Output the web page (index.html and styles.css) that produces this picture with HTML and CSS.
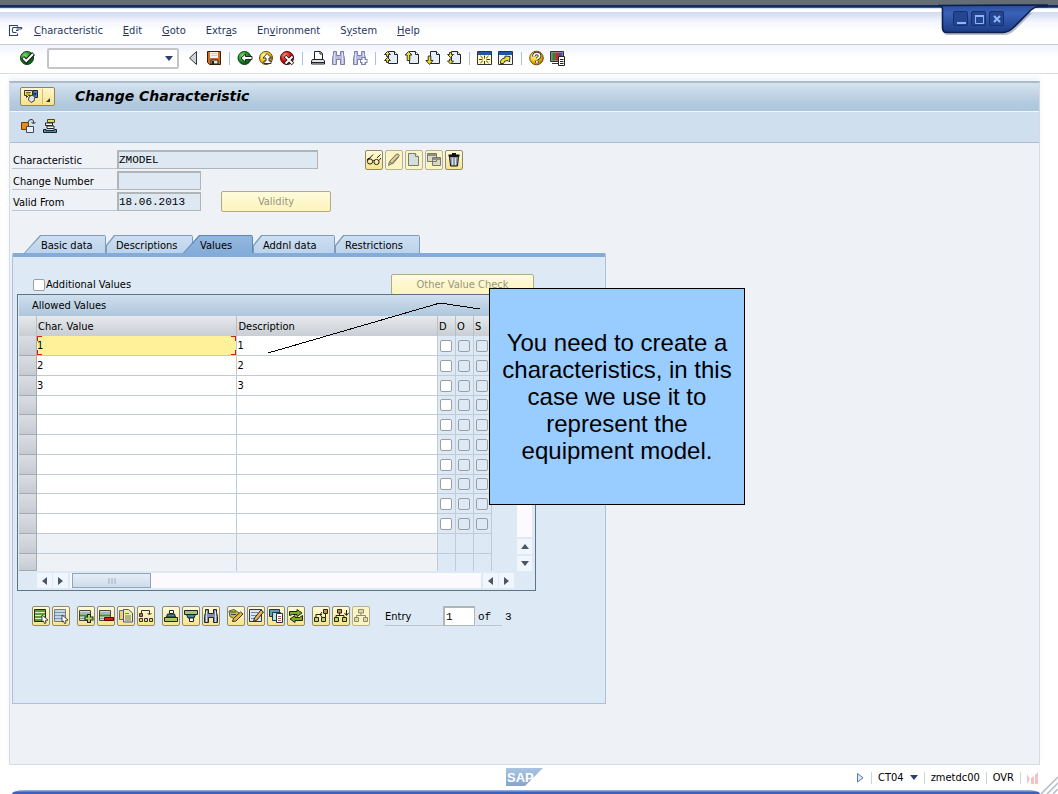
FILE: index.html
```html
<!DOCTYPE html>
<html lang="en">
<head>
<meta charset="utf-8">
<title>Change Characteristic</title>
<link rel="stylesheet" href="styles.css">
</head>
<body>
<svg class="defs" aria-hidden="true">
  <defs>
    <radialGradient id="green" cx=".35" cy=".3" r=".8"><stop offset="0" stop-color="#7fdc6a"/><stop offset=".5" stop-color="#1d8a2a"/><stop offset="1" stop-color="#04440f"/></radialGradient>
    <radialGradient id="gold" cx=".35" cy=".3" r=".8"><stop offset="0" stop-color="#fffbb0"/><stop offset=".5" stop-color="#f2c71c"/><stop offset="1" stop-color="#a06a00"/></radialGradient>
    <radialGradient id="red" cx=".35" cy=".3" r=".8"><stop offset="0" stop-color="#ff8a70"/><stop offset=".5" stop-color="#cf1616"/><stop offset="1" stop-color="#6a0000"/></radialGradient>
    <linearGradient id="cap" x1="0" y1="0" x2="0" y2="1"><stop offset="0" stop-color="#2b4c9c"/><stop offset=".3" stop-color="#3a62b8"/><stop offset="1" stop-color="#1b3b86"/></linearGradient>
    <linearGradient id="logo" x1="0" y1="0" x2="0" y2="1"><stop offset="0" stop-color="#a9c3e2"/><stop offset="1" stop-color="#85a5cf"/></linearGradient>
    <symbol id="page" viewBox="0 0 16 16"><path d="M5.500 1.500h6l3 3v9h-9z" fill="#e4eefb" stroke="#222"/><path d="M11.500 1.500v3h3" fill="#fff" stroke="#222"/></symbol>
    <symbol id="binoc" viewBox="0 0 16 16"><path d="M1.500 14.500v-6l1-4v-3h3v4h4v-4h3v3l1 4v6h-4v-5h-4v5z" fill="#b9bce0" stroke="#7b7fae"/><path d="M3.500 3v11M11.500 3v11" stroke="#dcdef2"/></symbol>
  </defs>
</svg>

<div class="window">
  <div class="window-edge"></div>
  <div class="window-controls">
    <svg class="controls-shape" width="120" height="38" viewBox="0 0 120 38" aria-hidden="true">
      <path d="M3 13H5V29Q5 35 10 35H66Q72 35 77 30L94 13z" fill="#8a90a8" opacity=".6"/>
      <path d="M0 5.500H2Q4.500 6 4.500 10V28Q4.500 32.500 9 32.500H64Q70 32.500 75 28L93 10Q97 6.500 101 6.500H109V5z" fill="url(#cap)" stroke="#0c1f4f" stroke-width="1.600"/>
    </svg>
    <button class="wbtn" aria-label="Minimize"><svg width="14" height="14"><path d="M3 11h9" stroke="#8fb4ff" stroke-width="2"/></svg></button>
    <button class="wbtn" aria-label="Maximize"><svg width="14" height="14"><path d="M3 3.500h9M3.500 3v8.500h8V3" fill="none" stroke="#8fb4ff"/><path d="M3 4h9" stroke="#8fb4ff" stroke-width="2"/></svg></button>
    <button class="wbtn" aria-label="Close"><svg width="14" height="14"><path d="M4 4l6 6M10 4l-6 6" stroke="#8fb4ff" stroke-width="2"/></svg></button>
  </div>

  <nav class="menubar">
    <svg width="16" height="14" viewBox="0 0 16 14" aria-hidden="true"><path d="M9.500 2.500V1.500h-8v10h8V9.500M5 3.500h8.500q1 1.200-1 1.500H8.500M5 3.500Q3.500 6 5 8.500h3.500M8 6.500h2.500" fill="none" stroke="#33416b" stroke-width="1.100"/></svg>
    <a href="#"><u>C</u>haracteristic</a><a href="#"><u>E</u>dit</a><a href="#"><u>G</u>oto</a><a href="#">Extr<u>a</u>s</a><a href="#">En<u>v</u>ironment</a><a href="#">S<u>y</u>stem</a><a href="#"><u>H</u>elp</a>
  </nav>

  <div class="toolbar">
    <button class="tool enter" aria-label="Enter"><svg viewBox="0 0 16 16"><circle cx="8" cy="8" r="6.500" fill="url(#green)" stroke="#0c3d12"/><path d="M3.800 7.500l3.400 3.600L14.500 3.500" fill="none" stroke="#111" stroke-width="4"/><path d="M4.200 8l3 3L14 4" fill="none" stroke="#fff" stroke-width="2"/></svg></button>
    <div class="combo"><select aria-label="Command"></select><svg width="8" height="5"><path d="M0 0h8L4 5z" fill="#2b3e6e"/></svg></div>
    <button class="tool" aria-label="Collapse"><svg viewBox="0 0 16 16"><path d="M11.500 1.500v13L4.500 8z" fill="#cfd3da" stroke="#333"/></svg></button>
    <button class="tool" aria-label="Save"><svg viewBox="0 0 16 16"><path d="M1.500 1.500h13v13h-11l-2-2z" fill="#c8702a" stroke="#3a1c0a"/><path d="M4 2h8v6H4z" fill="#fff3f0"/><path d="M5 3.500h6M5 5.500h6" stroke="#e9bcb4"/><path d="M5 10h7v4H5z" fill="#ddd" stroke="#3a1c0a"/><path d="M6 11h2v3H6z" fill="#222"/></svg></button>
    <span class="sep"></span>
    <button class="tool" aria-label="Back"><svg viewBox="0 0 16 16"><circle cx="7.500" cy="8" r="6.500" fill="url(#green)" stroke="#0c3d12"/><path d="M4 8l4.500-4v2.500H15v3H8.500V12z" fill="#fff" stroke="#111" stroke-width=".9"/></svg></button>
    <button class="tool" aria-label="Exit"><svg viewBox="0 0 16 16"><circle cx="8" cy="8" r="6.500" fill="url(#gold)" stroke="#6b4a00"/><path d="M9 3.500l4.500 4.500h-2.500v3h2v2.500H6V11h2V8H5z" fill="#fff" stroke="#222" stroke-width=".9"/></svg></button>
    <button class="tool" aria-label="Cancel"><svg viewBox="0 0 16 16"><circle cx="8" cy="8" r="6.500" fill="url(#red)" stroke="#5a0000"/><path d="M6 6l8 8M14 6l-8 8" stroke="#222" stroke-width="3.500"/><path d="M6.500 6.500l7 7M13.500 6.500l-7 7" stroke="#fff" stroke-width="1.800"/></svg></button>
    <span class="sep"></span>
    <button class="tool" aria-label="Print"><svg viewBox="0 0 16 16"><path d="M4.500 1.500h6l2 2v6h-8z" fill="#fff" stroke="#222"/><path d="M10 2v2h2.500" fill="none" stroke="#222"/><path d="M2.500 9.500h11l1 1.500v3h-13v-3z" fill="#dfe3ea" stroke="#222"/><path d="M2 12.500h12" stroke="#222"/></svg></button>
    <button class="tool" aria-label="Find"><svg viewBox="0 0 16 16"><use href="#binoc"/></svg></button>
    <button class="tool" aria-label="Find next"><svg viewBox="0 0 16 16"><use href="#binoc"/><path d="M11.500 7v8M8 11h7.500" stroke="#7b7fae" stroke-width="4"/><path d="M11.500 8v6M9 11h5.500" stroke="#fff" stroke-width="2"/></svg></button>
    <span class="sep"></span>
    <button class="tool" aria-label="First page"><svg viewBox="0 0 16 16"><use href="#page"/><path d="M4.500 1.500L7.500 4.500H5.500v2H3.500v-2H1.500zM4.500 7.500l3 3H5.500v2H3.500v-2H1.500z" fill="#f5e11c" stroke="#333"/></svg></button>
    <button class="tool" aria-label="Previous page"><svg viewBox="0 0 16 16"><use href="#page"/><path d="M4.500 1.500L8 5H5.800v5.500H3.200V5H1z" fill="#f5e11c" stroke="#333"/></svg></button>
    <button class="tool" aria-label="Next page"><svg viewBox="0 0 16 16"><use href="#page"/><path d="M4.500 14.500L8 10.500H5.800V6H3.200v4.500H1z" fill="#f5e11c" stroke="#333"/></svg></button>
    <button class="tool" aria-label="Last page"><svg viewBox="0 0 16 16"><use href="#page"/><path d="M4.500 7.500l3-3H5.500v-2H3.500v2H1.500zM4.500 14l3-3H5.500V9H3.500v2H1.500z" fill="#f5e11c" stroke="#333"/></svg></button>
    <span class="sep"></span>
    <button class="tool" aria-label="New session"><svg viewBox="0 0 16 16"><path d="M.5 1.500h14v13H.5z" fill="#fff9c4" stroke="#333"/><path d="M1 2h13v3H1z" fill="#2356a8"/><path d="M7.500 5.500v3M7.500 11v3M2 9.500h3.500M9.500 9.500H13M3.500 6l2.300 2.200M11.500 6L9.200 8.200M3.500 13l2.300-2.200M11.500 13l-2.300-2.200" stroke="#4b4000"/></svg></button>
    <button class="tool" aria-label="Shortcut"><svg viewBox="0 0 16 16"><path d="M.5 1.500h14v13H.5z" fill="#f2f5fa" stroke="#333"/><path d="M1 2h13v3H1z" fill="#2356a8"/><path d="M2.500 13.500q-.5-5 4.500-5.500V6l5 .5-.5 5.500-1.500-1.500q-4-.5-4.500 3z" fill="#f5e11c" stroke="#333"/></svg></button>
    <span class="sep"></span>
    <button class="tool" aria-label="Help"><svg viewBox="0 0 16 16"><circle cx="7.500" cy="8" r="6.800" fill="url(#gold)" stroke="#7a4e00"/><path d="M4.800 6.500q0-3 2.900-3t2.900 2.500q0 1.500-2.700 3M7.900 10.800v2" fill="none" stroke="#333" stroke-width="3.400"/><path d="M4.800 6.500q0-3 2.900-3t2.900 2.500q0 1.500-2.700 3M7.900 11v1.700" fill="none" stroke="#fff" stroke-width="1.700"/></svg></button>
    <button class="tool" aria-label="Customize layout"><svg viewBox="0 0 16 16"><path d="M.5 1.500h13v10H.5zM2 13.500h7" fill="#888" stroke="#333"/><path d="M2.500 3h3v7h-3z" fill="#1e8b2e"/><path d="M5.500 3H9v7H5.500z" fill="#d82020"/><path d="M9 3h3v7H9z" fill="#2750d8"/><path d="M8.500 6.500h6v9h-6z" fill="#fff" stroke="#222"/><path d="M10 9.500h3.500M10 11.500h3.500M10 13.500h3.500" stroke="#222"/></svg></button>
  </div>

  <main class="screen">
    <header class="titlebar">
      <button class="service" aria-label="Services for object">
        <svg width="18" height="15" viewBox="0 0 18 15"><path d="M2.500 1.500h8v5h-4l-2 2v-2h-2z" fill="#ffe65a" stroke="#333"/><path d="M4 3.500h5M4 5h4" stroke="#333" stroke-width=".7"/><path d="M11 1.500h4.500v7H11z" fill="#4a86c8" stroke="#223"/><path d="M12.500 3l2 2-2 2z" fill="#112"/><path d="M7 8l3-2 3 2-1 4-3 1.500L6.500 11z" fill="#dfe3e8" stroke="#444"/></svg>
        <span class="service-line"></span>
        <svg width="5" height="5"><path d="M4 1v4H0z" fill="#333"/></svg>
      </button>
      <h1>Change Characteristic</h1>
    </header>
    <div class="appbar">
      <button class="tool" aria-label="Copy from"><svg viewBox="0 0 16 16"><path d="M1.500 4.500h7v7h-7z" fill="#e88a1a" stroke="#6b3c08"/><path d="M6.500 8.500h7v6h-7z" fill="#e8f0fb" stroke="#3a4a66"/><path d="M8 4q1-3 4-2.500 2 .5 1.500 3.500M11.500 4l2 2 2-2" fill="none" stroke="#333"/></svg></button>
      <button class="tool" aria-label="Where used"><svg viewBox="0 0 16 16"><path d="M5.500 1.500h7v3h-7z" fill="#e3d860" stroke="#444"/><path d="M3.500 5h7v2.500h-7zM5 8h7v2.500H5z" fill="#fff" stroke="#222"/><path d="M1.500 14.500v-3H4v1h8v-1h2.500v3z" fill="#5d8ca0" stroke="#123"/></svg></button>
    </div>

    <div class="content">
      <form class="head">
        <div class="fields">
          <div class="field"><label for="char">Characteristic</label><input id="char" class="long" value="ZMODEL" readonly></div>
          <div class="field"><label for="num">Change Number</label><input id="num" value="" readonly></div>
          <div class="field"><label for="from">Valid From</label><input id="from" value="18.06.2013" readonly><button type="button" class="btn validity" disabled>Validity</button></div>
        </div>
        <div class="icons">
          <button type="button" class="ib" aria-label="Display"><svg viewBox="0 0 16 16"><path d="M7 2.500L3 7M14.500 2.500L11 6" fill="none" stroke="#222"/><circle cx="4" cy="9.500" r="2.600" fill="none" stroke="#222"/><circle cx="10.500" cy="10" r="2.600" fill="none" stroke="#222"/><path d="M6.500 9q1-1 1.500 0M1.500 9V7l2-1M13 8.500L15 6" fill="none" stroke="#222"/></svg></button>
          <button type="button" class="ib off" aria-label="Change" disabled><svg viewBox="0 0 16 16"><path d="M2.500 13.500l1-4 7-7.500q2-.5 3 1.500l-7.500 8z" fill="#d0c8a8" stroke="#77714f"/><path d="M4 10l2.500 2L12.500 5" fill="none" stroke="#77714f"/></svg></button>
          <button type="button" class="ib off" aria-label="Create" disabled><svg viewBox="0 0 16 16"><path d="M2.500 1.500h7l3 3v9h-10z" fill="#d3dfdd" stroke="#77796a"/><path d="M9.500 1.500v3h3" fill="#fff" stroke="#77796a"/></svg></button>
          <button type="button" class="ib off" aria-label="Copy" disabled><svg viewBox="0 0 16 16"><path d="M1.500 1.500h9v8h-9zM6.500 5.500h8v8h-8z" fill="#d8d8c4" stroke="#77796a"/><path d="M2 2h8v2H2zM7 6h7v2H7z" fill="#8c9088"/></svg></button>
          <button type="button" class="ib" aria-label="Delete"><svg viewBox="0 0 16 16"><path d="M3.500 4.500h9l-1 9.500h-7z" fill="#8f9aac" stroke="#111"/><path d="M2.500 3.500h11M6 2h4" stroke="#111" stroke-width="1.800"/><path d="M6.500 6v7M9.500 6v7" stroke="#dce3ee"/></svg></button>
        </div>
      </form>

      <div class="tabs" role="tablist">
        <button role="tab" class="tab slope t1"><span>Basic data</span></button><button role="tab" class="tab t2"><span>Descriptions</span></button><button role="tab" class="tab slope active t3" aria-selected="true"><span>Values</span></button><button role="tab" class="tab t4"><span>Addnl data</span></button><button role="tab" class="tab t5"><span>Restrictions</span></button>
      </div>

      <section class="panel">
        <div class="options">
          <label class="check"><input type="checkbox">Additional Values</label>
          <button class="btn other" disabled>Other Value Check</button>
        </div>
        <div class="frame">
          <h2>Allowed Values</h2>
          <div class="grid-area">
            <table>
              <colgroup><col class="c-sel"><col class="c-txt"><col class="c-txt"><col class="c-box"><col class="c-box"><col class="c-box"></colgroup>
              <thead><tr><th></th><th>Char. Value</th><th>Description</th><th>D</th><th>O</th><th>S</th></tr></thead>
              <tbody>
                <tr><th></th><td class="current">1</td><td>1</td><td><input type="checkbox" aria-label="D"></td><td><input type="checkbox" disabled aria-label="O"></td><td><input type="checkbox" disabled aria-label="S"></td></tr>
                <tr><th></th><td>2</td><td>2</td><td><input type="checkbox" aria-label="D"></td><td><input type="checkbox" disabled aria-label="O"></td><td><input type="checkbox" disabled aria-label="S"></td></tr>
                <tr><th></th><td>3</td><td>3</td><td><input type="checkbox" aria-label="D"></td><td><input type="checkbox" disabled aria-label="O"></td><td><input type="checkbox" disabled aria-label="S"></td></tr>
                <tr><th></th><td></td><td></td><td><input type="checkbox" aria-label="D"></td><td><input type="checkbox" disabled aria-label="O"></td><td><input type="checkbox" disabled aria-label="S"></td></tr>
                <tr><th></th><td></td><td></td><td><input type="checkbox" aria-label="D"></td><td><input type="checkbox" disabled aria-label="O"></td><td><input type="checkbox" disabled aria-label="S"></td></tr>
                <tr><th></th><td></td><td></td><td><input type="checkbox" aria-label="D"></td><td><input type="checkbox" disabled aria-label="O"></td><td><input type="checkbox" disabled aria-label="S"></td></tr>
                <tr><th></th><td></td><td></td><td><input type="checkbox" aria-label="D"></td><td><input type="checkbox" disabled aria-label="O"></td><td><input type="checkbox" disabled aria-label="S"></td></tr>
                <tr><th></th><td></td><td></td><td><input type="checkbox" aria-label="D"></td><td><input type="checkbox" disabled aria-label="O"></td><td><input type="checkbox" disabled aria-label="S"></td></tr>
                <tr><th></th><td></td><td></td><td><input type="checkbox" aria-label="D"></td><td><input type="checkbox" disabled aria-label="O"></td><td><input type="checkbox" disabled aria-label="S"></td></tr>
                <tr><th></th><td></td><td></td><td><input type="checkbox" aria-label="D"></td><td><input type="checkbox" disabled aria-label="O"></td><td><input type="checkbox" disabled aria-label="S"></td></tr>
                <tr class="blank"><th></th><td></td><td></td><td></td><td></td><td></td></tr>
                <tr class="blank"><th></th><td></td><td></td><td></td><td></td><td></td></tr>
              </tbody>
            </table>
            <div class="vscroll">
              <span class="vtrack"></span>
              <button aria-label="Scroll up"><svg width="8" height="5"><path d="M0 5h8L4 0z" fill="#4a5866"/></svg></button>
              <button aria-label="Scroll down"><svg width="8" height="5"><path d="M0 0h8L4 5z" fill="#4a5866"/></svg></button>
            </div>
          </div>
          <div class="hscroll">
            <button aria-label="First column"><svg width="5" height="8"><path d="M5 0v8L0 4z" fill="#4a5866"/></svg></button>
            <button aria-label="Next column"><svg width="5" height="8"><path d="M0 0v8l5-4z" fill="#4a5866"/></svg></button>
            <div class="htrack"><span class="thumb"><svg width="8" height="6"><path d="M0 1h8M0 3h8M0 5h8" stroke="#9fb0c4" stroke-dasharray="2 1"/></svg></span></div>
            <button aria-label="Scroll left"><svg width="5" height="8"><path d="M5 0v8L0 4z" fill="#4a5866"/></svg></button>
            <button aria-label="Scroll right"><svg width="5" height="8"><path d="M0 0v8l5-4z" fill="#4a5866"/></svg></button>
          </div>
        </div>

        <div class="actions">
          <div class="icons">
            <button class="ib" aria-label="Select all"><svg viewBox="0 0 16 16"><path d="M1.500 1.500h11v12h-11z" fill="#5f9a34" stroke="#222"/><path d="M2 4.500h10M2 7.500h10M2 10.500h10" stroke="#dff0b8"/><path d="M9 7l6 5-2.500.5L13 15l-1.500.5-1-2.500L9 14z" fill="#fff" stroke="#222" stroke-width=".8"/></svg></button>
            <button class="ib" aria-label="Deselect all"><svg viewBox="0 0 16 16"><path d="M1.500 1.500h11v12h-11z" fill="#c4d6e2" stroke="#778"/><path d="M2 4.500h10M2 7.500h10M2 10.500h10" stroke="#7a98b0"/><path d="M9 7l6 5-2.500.5L13 15l-1.500.5-1-2.500L9 14z" fill="#fff" stroke="#222" stroke-width=".8"/></svg></button>
          </div>
          <div class="icons">
            <button class="ib" aria-label="Insert line"><svg viewBox="0 0 16 16"><path d="M1.500 2.500h11v10h-11z" fill="#cdd8dc" stroke="#444"/><path d="M2 5h10M2 10.500h10" stroke="#7b93a0"/><path d="M2 7.500h10" stroke="#4f8a28" stroke-width="2"/><path d="M11 6v9M6.500 10.500h9" stroke="#222" stroke-width="4"/><path d="M11 7v7M7.500 10.500h7" stroke="#a8d86a" stroke-width="2"/></svg></button>
            <button class="ib" aria-label="Delete line"><svg viewBox="0 0 16 16"><path d="M1.500 2.500h11v10h-11z" fill="#cdd8dc" stroke="#444"/><path d="M2 5h10M2 10.500h10" stroke="#7b93a0"/><path d="M2 7.500h10" stroke="#4f8a28" stroke-width="2"/><path d="M6.500 9.500h9v3h-9z" fill="#d81818" stroke="#5a0000"/></svg></button>
            <button class="ib" aria-label="Copy line"><svg viewBox="0 0 16 16"><path d="M1.500 4.500v-2h6v9h-6z" fill="#e8d860" stroke="#666"/><path d="M5.500 1.500h5l4 3.500v9h-9z" fill="#eaf0a8" stroke="#5548a0"/><path d="M7 5.500h4M7 8h6M7 10h6M7 12h6" stroke="#777"/></svg></button>
            <button class="ib" aria-label="Sort"><svg viewBox="0 0 16 16"><path d="M3.500 6V2.500h8V6M9.500 5l2 2 2-2" fill="none" stroke="#333"/><path d="M1.500 5.500h3v3h-3z" fill="#b07038" stroke="#333"/><path d="M1.500 10.500h3v3h-3zM6.500 10.500h3v3h-3zM11.500 10.500h3v3h-3z" fill="#d6d890" stroke="#333"/></svg></button>
          </div>
          <div class="icons">
            <button class="ib" aria-label="Sort ascending"><svg viewBox="0 0 16 16"><path d="M6.500 2.500h4v3h-4z" fill="#fff" stroke="#222"/><path d="M4.500 6h7l1 3h-9z" fill="#3a8aa0" stroke="#222"/><path d="M1.500 9.500h13v4h-13z" fill="#a4c860" stroke="#222"/></svg></button>
            <button class="ib" aria-label="Sort descending"><svg viewBox="0 0 16 16"><path d="M1.500 2.500h13v4h-13z" fill="#a4c860" stroke="#222"/><path d="M3.500 6.500h9l-1.500 3.500H5z" fill="#3a8aa0" stroke="#222"/><path d="M6.500 10h4v3.500h-4z" fill="#fff" stroke="#222"/></svg></button>
            <button class="ib" aria-label="Find"><svg viewBox="0 0 16 16"><path d="M1.500 14.500v-6l1-4v-3h3v4h5v-4h3v3l1 4v6h-4v-5h-5v5z" fill="#7f8bb8" stroke="#222"/><path d="M3.500 3v11M12.500 3v11" stroke="#d8def2"/></svg></button>
          </div>
          <div class="icons">
            <button class="ib" aria-label="Change documents"><svg viewBox="0 0 16 16"><path d="M1 3l5-1.500L11 5l-5 5.500-4-2z" fill="#b8d020" stroke="#555"/><path d="M2 4h6M3 6.500h5" stroke="#444"/><path d="M4.500 13.500l1-3 7-6.500 2.500 2-7 7z" fill="#f0b048" stroke="#333"/></svg></button>
            <button class="ib" aria-label="Long text"><svg viewBox="0 0 16 16"><path d="M1.500 1.500h12v12h-12z" fill="#dce6f2" stroke="#334"/><path d="M3 4.500h7M3 7.500h6M3 10.500h4" stroke="#6a8ab0"/><path d="M5.500 13.500l1-3.500L13 2l2.500 2-6.500 8z" fill="#f0b048" stroke="#222"/></svg></button>
            <button class="ib" aria-label="Document"><svg viewBox="0 0 16 16"><path d="M1.500 1.500h10v7h-10z" fill="#5aa0b0" stroke="#234"/><path d="M4.500 4.500h8v8h-8z" fill="#bfe0e8" stroke="#234"/><path d="M8.500 5.500h6v9h-6z" fill="#fff" stroke="#234"/><path d="M10 8.500h3M10 10.500h3M10 12.500h3" stroke="#b05a6a"/></svg></button>
            <button class="ib" aria-label="Refresh"><svg viewBox="0 0 16 16"><path d="M1.500 7.500v-4h7.500V1.500L14 5 9 8.500V6.500H4.500zM14.500 7.500v5H7v2L2 11l5-3.500v2h4.500z" fill="#7ab020" stroke="#222"/></svg></button>
          </div>
          <div class="icons">
            <button class="ib" aria-label="Hierarchy"><svg viewBox="0 0 16 16"><path d="M3 9V6.500h6M12.500 6v4M9 4L7 6.500 9 9" fill="none" stroke="#222"/><path d="M10.500 1.500h4v4h-4z" fill="#d09038" stroke="#222"/><path d="M1.500 9.500h4v4h-4zM8.500 9.500h4v4h-4z" fill="#bcd070" stroke="#222"/></svg></button>
            <button class="ib" aria-label="Expand"><svg viewBox="0 0 16 16"><path d="M6.500 5v2.500M3 9.500v-2h8v2M13.500 2v5M11.500 5l2 2.500 2-2.500" fill="none" stroke="#222"/><path d="M4.500 1.500h4v3.500h-4z" fill="#d09038" stroke="#222"/><path d="M1.500 9.500h4v4h-4zM9.500 9.500h4v4h-4z" fill="#bcd070" stroke="#222"/></svg></button>
            <button class="ib off" aria-label="Collapse" disabled><svg viewBox="0 0 16 16"><path d="M8 5v2.500M3.500 9.500v-2h9v2" fill="none" stroke="#8d8a6c"/><path d="M5.500 1.500h5v3.500h-5zM1.500 9.500h4v4h-4zM10.500 9.500h4v4h-4z" fill="#ddd8b0" stroke="#8d8a6c"/></svg></button>
          </div>
          <div class="entry"><label for="entry">Entry</label><input id="entry" value="1"><span class="of">of</span><span class="total">3</span></div>
        </div>
      </section>
    </div>
  </main>

  <footer class="status">
    <div class="brand">
      <svg width="38" height="19" viewBox="0 0 38 19" role="img" aria-label="SAP"><path d="M0 0h37L19 18H0z" fill="url(#logo)"/><text x="1" y="14" class="logo-text">SAP</text></svg>
    </div>
    <div class="info">
      <svg width="9" height="12" aria-hidden="true"><path d="M1.500 1.500v8.500L7 5.800z" fill="#dce9f8" stroke="#5878a0"/></svg>
      <span class="bar"></span><span>CT04</span><svg width="8" height="5" aria-hidden="true"><path d="M0 0h8L4 5z" fill="#2b3e6e"/></svg>
      <span class="bar"></span><span>zmetdc00</span><span class="bar"></span><span>OVR</span><span class="bar"></span>
      <svg width="11" height="12" aria-hidden="true"><path d="M0 12V2l3 5zM4 12V6l3-2v8zM8 12V3l3-3v12z" fill="#f2c4c8"/></svg>
    </div>
    <svg class="grip" width="18" height="18" aria-hidden="true"><path d="M1 18L18 1M7 18L18 7M13 18l5-5" stroke="#b4b9c4" stroke-width="1.500"/></svg>
  </footer>
  <div class="bottom-edge"></div>

  <svg class="pointer" width="220" height="60" aria-hidden="true"><path d="M8 54L180 4l40 6" fill="none" stroke="#000" shape-rendering="crispEdges"/></svg>
  <aside class="callout">You need to create a characteristics, in this case we use it to represent the equipment model.</aside>
</div>
</body>
</html>
```

FILE: styles.css
```css
* { box-sizing: border-box; }
body {
  margin: 0;
  background: #fff;
  color: #000;
  font: 11px/16px "DejaVu Sans Condensed", "DejaVu Sans", sans-serif;
}
button, input, select { font: inherit; color: inherit; margin: 0; }
button { padding: 0; border: 0; background: none; }
.defs { position: absolute; width: 0; height: 0; }

.window { position: relative; display: flex; flex-direction: column; min-height: 100vh; }
.window-edge {
  height: 12px;
  background: linear-gradient(#646d74 0 5px, #142c60 5px 7px, #3a5590 7px 8px, #dbe4f5 8px 9px, #fff 9px);
}
.window-controls {
  position: absolute; top: 0; right: 0;
  width: 120px; height: 38px; padding: 11px 0 0 15px;
  display: flex; gap: 3px;
}
.controls-shape { position: absolute; top: 0; left: 0; }
.wbtn {
  position: relative; width: 15px; height: 15px;
  background: #24458f; border: 1px solid #17316f; border-radius: 2px;
  display: grid; place-items: center;
}

.menubar {
  display: flex; align-items: center; gap: 20px;
  height: 33px; padding: 5px 8px 0;
  background: linear-gradient(#d0d9ef, #f3f6fc 10px, #fff 18px);
  border-bottom: 1px solid #c9cdd6;
}
.menubar svg { margin-right: -10px; }
.menubar a { color: #27365f; text-decoration: none; }

.toolbar {
  display: flex; align-items: center; gap: 5px;
  height: 29px; padding: 0 19px 2px;
  background: linear-gradient(#f1f3fd, #fff 12px);
  border-bottom: 1px solid #d8dbe4;
}
.tool { width: 16px; height: 16px; flex: none; }
.tool svg { display: block; width: 16px; height: 16px; }
.enter { margin-right: 7px; }
.sep { width: 1px; height: 13px; margin: 0 2px; background: #a9c4de; }
.combo { position: relative; width: 132px; height: 21px; margin-right: 1px; }
.combo select {
  display: block; width: 100%; height: 100%; appearance: none;
  border: 2px solid #c3c5c9; border-radius: 2px; background: #fff;
}
.combo svg { position: absolute; right: 6px; top: 8px; }

.screen {
  flex: 1; display: flex; flex-direction: column;
  margin: 7px 18px 0 9px;
  border: 1px solid #d5dbe4; border-top: 2px solid #adbac9;
  background: #eef2f7;
  box-shadow: 0 -4px 5px #f1f3fb;
}
.titlebar {
  display: flex; align-items: center; gap: 20px;
  height: 28px; padding: 0 0 2px 10px;
  background: linear-gradient(#d5e3f0, #b3cade 70%, #aec6dd);
}
.titlebar h1 { margin: 0; font: italic bold 14px/20px "DejaVu Sans", sans-serif; }
.service {
  width: 35px; height: 19px; display: flex; align-items: center; gap: 1px; padding-left: 1px;
  background: linear-gradient(#fff8cf, #f8e38b);
  border: 1px solid #8b8562; border-radius: 2px;
}
.service-line { width: 1px; height: 15px; margin: 0 2px 0 1px; background: #d0bd72; }
.service svg:last-child { margin-top: 7px; }
.appbar {
  display: flex; align-items: center; gap: 6px;
  height: 32px; padding: 0 0 2px 10px;
  background: #cfdfee; border-top: 1px solid #f2f6fa; border-bottom: 1px solid #a9bfd6;
}

.content { padding: 7px 2px 60px; }
.head { display: flex; align-items: flex-start; }
.fields { display: flex; flex-direction: column; gap: 2px; width: 353px; }
.field { display: flex; height: 19px; }
.field label {
  width: 105px; padding: 3px 0 0 1px; line-height: 15px; border-bottom: 1px solid #bfc5cc;
}
.field input {
  width: 84px; height: 19px; padding: 0;
  background: #dde8f3; border: 2px solid #b0b5ba; border-right-width: 1px; border-bottom-width: 1px;
  border-radius: 0; font-family: "Liberation Mono", monospace;
}
.field .long { width: 201px; }
.btn {
  height: 21px; border: 1px solid #b3ab85; border-radius: 2px;
  background: linear-gradient(#fffbdc, #fdf3bc); color: #98967f;
}
.validity { width: 110px; margin: -1px 0 0 20px; }
.icons { display: flex; gap: 2px; }
.ib {
  width: 18px; height: 20px; display: grid; place-items: center;
  background: linear-gradient(#fffbd8, #f8e48c);
  border: 1px solid #8f8a6c; border-radius: 2px;
}
.ib svg { display: block; width: 16px; height: 16px; }
.ib.off { background: #fdf4c4; border-color: #b9b28c; }

.tabs { display: flex; height: 18px; margin-top: 24px; padding-left: 12px; }
.tab {
  position: relative; text-align: left; height: 18px;
  background: #7f9cbc;
  clip-path: polygon(0 100%, 0 10px, 8px 0, calc(100% - 1px) 0, 100% 2px, 100% 100%);
}
.tab::before {
  content: ""; position: absolute; inset: 1px 1px 0 1px;
  background: linear-gradient(#cddff1, #bcd3ec);
  clip-path: polygon(0 100%, 0 10px, 8px 0, 100% 0, 100% 100%);
}
.tab.slope { clip-path: polygon(0 100%, 16px 0, calc(100% - 1px) 0, 100% 2px, 100% 100%); z-index: 1; }
.tab.slope::before { clip-path: polygon(0 100%, 16px 0, 100% 0, 100% 100%); }
.tab.active { background: #5f87b5; }
.tab.active::before { background: linear-gradient(#93b7df, #84add9); }
.tab span { position: relative; display: block; padding: 3px 0 0 10px; line-height: 15px; }
.tab.slope span { padding-left: 17px; }
.t1 { width: 82px; }
.t2 { width: 87px; }
.t3 { width: 70px; margin-left: -10px; }
.t4 { width: 82px; }
.t5 { width: 85px; }

.panel {
  width: 594px; padding: 17px 4px 77px;
  background: #dde9f5;
  border: 1px solid #a9c1dd; border-top: 4px solid #84acd8; border-radius: 2px 2px 0 0;
}
.options { display: flex; justify-content: space-between; height: 20px; width: 517px; padding-left: 16px; overflow: hidden; }
.check { display: flex; align-items: center; gap: 1px; padding-top: 2px; }
input[type="checkbox"] {
  display: block; appearance: none; width: 12px; height: 12px;
  background: #fff; border: 1px solid #9a9fa5; border-radius: 2px;
}
input[type="checkbox"]:disabled { background: #dde9f5; }
.other { width: 143px; }

.frame { width: 519px; border: 1px solid #5f7386; padding: 0 1px; background: #dde9f5; }
.frame h2 {
  margin: 0; height: 21px; padding: 2px 0 0 13px; font: inherit; line-height: 17px;
  background: linear-gradient(#cfdfed, #aec6dd);
}
.grid-area { display: flex; justify-content: space-between; }
table { width: 473px; table-layout: fixed; border-collapse: separate; border-spacing: 0; }
.c-sel { width: 18px; }
.c-txt { width: 200px; }
.c-box { width: 18px; }
thead th {
  height: 20px; padding: 2px 0 0 1px; text-align: left; font-weight: normal; overflow: hidden;
  background: linear-gradient(#e6e9ed, #c9ced4); border-right: 1px solid #b6bdc6;
}
tbody tr { height: 20px; }
tbody tr:nth-child(4n) { height: 19px; }
tbody tr:last-child { height: 17px; }
td, tbody th { padding: 0; border: 0 solid #bfccd8; border-width: 0 1px 1px 0; line-height: 16px; }
tbody th { background: linear-gradient(#dadee3, #c6cbd2); border-color: #a4abb4; }
td:nth-child(-n+3) { background: #fff; }
td input[type="checkbox"] { margin: 0 auto; }
.blank td:nth-child(-n+3) { background: #eef2f7; }
tr:last-child td { border-bottom: 0; }
td.current {
  background:
    linear-gradient(#d02020 0 0) 0 0 / 5px 1px, linear-gradient(#d02020 0 0) 0 0 / 1px 5px,
    linear-gradient(#d02020 0 0) 100% 0 / 5px 1px, linear-gradient(#d02020 0 0) 100% 0 / 1px 5px,
    linear-gradient(#d02020 0 0) 0 100% / 5px 1px, linear-gradient(#d02020 0 0) 0 100% / 1px 5px,
    linear-gradient(#d02020 0 0) 100% 100% / 5px 1px, linear-gradient(#d02020 0 0) 100% 100% / 1px 5px,
    #fff09a;
  background-repeat: no-repeat;
}
.vscroll { display: flex; flex-direction: column; gap: 2px; width: 15px; margin-right: 2px; }
.vtrack { flex: 1; background: #fdfaff; }
.vscroll button, .hscroll button { display: grid; place-items: center; width: 15px; height: 15px; background: #f1f5fd; flex: none; }
.hscroll { display: flex; gap: 1px; padding: 2px 20px 2px 18px; height: 19px; }
.htrack { flex: 1; background: #fdfaff; margin: 0 1px; }
.thumb {
  display: grid; place-items: center; width: 79px; height: 15px; margin-left: 2px;
  background: linear-gradient(#e6eef8, #cfdceb); border: 1px solid #92a4b8;
}

.actions { display: flex; gap: 7px; padding: 15px 0 0 15px; }
.entry { display: flex; height: 20px; margin-left: 8px; }
.entry label { width: 58px; padding-top: 3px; border-bottom: 1px solid #bcc4cd; }
.entry input {
  width: 32px; height: 20px; padding: 0 1px; background: #fff;
  border: 2px solid #b0b5ba; border-width: 2px 1px 1px 2px; font-family: "Liberation Mono", monospace;
}
.entry span { padding-top: 3px; font-family: "Liberation Mono", monospace; }
.of { width: 26px; margin-left: 1px; padding-left: 2px; border-bottom: 1px solid #bcc4cd; }
.total { padding-left: 3px; }

.status { position: relative; display: flex; align-items: center; justify-content: flex-end; height: 25px; padding: 0 20px 0 0; }
.brand { position: absolute; left: 0; right: 9px; top: 3px; display: flex; justify-content: center; }
.logo-text { font: bold 13px "Liberation Sans", sans-serif; fill: #fff; }
.info { display: flex; align-items: center; gap: 6px; }
.bar { width: 1px; height: 12px; background: #cdd3da; }
.grip { position: absolute; right: 0; bottom: -4px; }
.bottom-edge { height: 4px; margin: 0 18px 0 12px; background: linear-gradient(#8ea8e0 0 1px, #3c62b8 2px); border-radius: 12px 12px 0 0 / 4px 4px 0 0; }

.pointer { position: absolute; left: 260px; top: 299px; pointer-events: none; }
.callout {
  position: absolute; left: 489px; top: 288px; width: 256px; min-height: 217px;
  display: flex; align-items: center; padding: 0 10px; text-align: center;
  background: #99ccff; border: 1px solid #000;
  font: 24px/27px "Liberation Sans", Arial, sans-serif;
}
```
